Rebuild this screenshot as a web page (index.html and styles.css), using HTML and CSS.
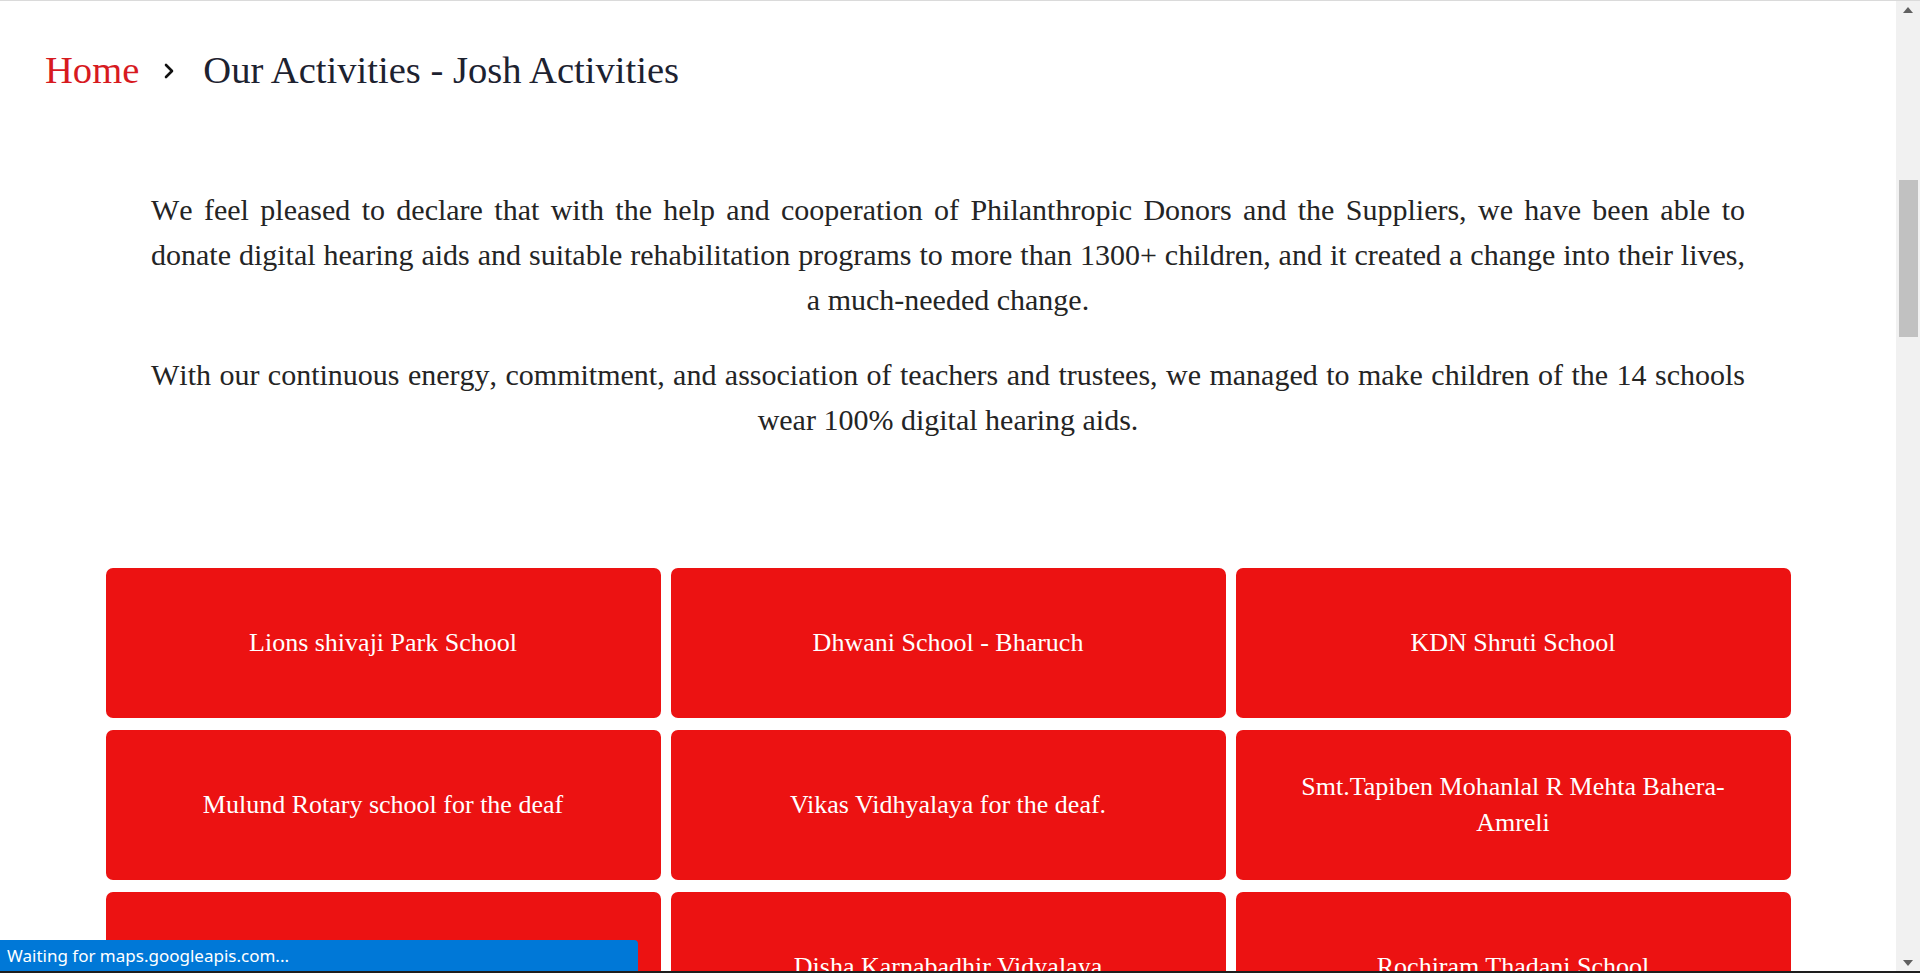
FILE: index.html
```html
<!DOCTYPE html>
<html lang="en">
<head>
<meta charset="utf-8">
<title>Our Activities - Josh Activities</title>
<link rel="stylesheet" href="styles.css">
</head>
<body>
<div class="window">
  <main class="page">
    <nav class="crumbs">
      <a class="crumb-home" href="#">Home</a>
      <svg class="crumb-sep" width="12" height="16" viewBox="0 0 12 16" aria-hidden="true"><path d="M3 2 L9 8 L3 14" fill="none" stroke="#111" stroke-width="2.6" stroke-linecap="round" stroke-linejoin="round"/></svg>
      <span class="crumb-current">Our Activities - Josh Activities</span>
    </nav>

    <section class="intro">
      <p>We feel pleased to declare that with the help and cooperation of Philanthropic Donors and the Suppliers, we have been able to donate digital hearing aids and suitable rehabilitation programs to more than 1300+ children, and it created a change into their lives, a much-needed change.</p>
      <p>With our continuous energy, commitment, and association of teachers and trustees, we managed to make children of the 14 schools wear 100% digital hearing aids.</p>
    </section>

    <section class="schools">
      <div class="school">Lions shivaji Park School</div>
      <div class="school">Dhwani School - Bharuch</div>
      <div class="school">KDN Shruti School</div>
      <div class="school">Mulund Rotary school for the deaf</div>
      <div class="school">Vikas Vidhyalaya for the deaf.</div>
      <div class="school">Smt.Tapiben Mohanlal R Mehta Bahera-Amreli</div>
      <div class="school"></div>
      <div class="school">Disha Karnabadhir Vidyalaya</div>
      <div class="school">Rochiram Thadani School</div>
    </section>
  </main>

  <div class="scrollbar" aria-hidden="true">
    <div class="sb-btn"><svg width="10" height="6" viewBox="0 0 10 6"><polygon points="0,6 10,6 5,0" fill="#606060"/></svg></div>
    <div class="sb-thumb"></div>
    <div class="sb-space"></div>
    <div class="sb-btn"><svg width="10" height="6" viewBox="0 0 10 6"><polygon points="0,0 10,0 5,6" fill="#606060"/></svg></div>
  </div>

  <div class="status">Waiting for maps.googleapis.com...</div>
</div>
</body>
</html>
```

FILE: styles.css
```css
html, body {
  margin: 0;
  padding: 0;
  background: #ffffff;
}

body {
  overflow: hidden;
}

.window {
  position: relative;
  display: flex;
  height: 970px;
  border-top: 1px solid #dadada;
  border-bottom: 2px solid #1e1e1e;
  overflow: hidden;
  background: #ffffff;
}

.page {
  flex: 1;
  min-width: 0;
  overflow: hidden;
  font-family: "Liberation Serif", "Times New Roman", serif;
}

/* breadcrumb */
.crumbs {
  display: flex;
  align-items: center;
  padding: 45px 0 0 45px;
  height: 48px;
  font-size: 38.6px;
  line-height: 48px;
}

.crumb-home {
  color: #d71a1f;
  text-decoration: none;
}

.crumb-sep {
  margin: 1px 28px 0 24px;
  flex: none;
}

.crumb-current {
  color: #1d2230;
}

/* intro text */
.intro {
  width: 1594px;
  margin: 93px auto 0;
  color: #242424;
  font-size: 30px;
  line-height: 45px;
  text-align: justify;
  text-align-last: center;
  font-kerning: none;
}

.intro p {
  margin: 0;
}

.intro p + p {
  margin-top: 30px;
}

/* school cards */
.schools {
  display: grid;
  grid-template-columns: repeat(3, 1fr);
  column-gap: 10px;
  row-gap: 12px;
  width: 1685px;
  margin: 126px auto 0;
}

.school {
  display: flex;
  align-items: center;
  justify-content: center;
  height: 150px;
  padding: 0 40px;
  box-sizing: border-box;
  background: #ec1212;
  border-radius: 7px;
  color: #ffffff;
  font-size: 26px;
  line-height: 36px;
  text-align: center;
}

/* scrollbar */
.scrollbar {
  flex: none;
  width: 24px;
  display: flex;
  flex-direction: column;
  background: #f1f1f1;
}

.sb-btn {
  height: 17px;
  display: flex;
  align-items: center;
  justify-content: center;
}

.sb-thumb {
  margin: 162px 2px 0 3px;
  height: 157px;
  background: #c1c1c1;
}

.sb-space {
  flex: 1;
}

/* browser status bubble */
.status {
  position: absolute;
  left: 0;
  bottom: 0;
  width: 631px;
  height: 31px;
  padding-left: 7px;
  background: #0078d7;
  color: #ffffff;
  border-top-right-radius: 4px;
  font-family: "Noto Sans", "Open Sans", sans-serif;
  font-size: 17px;
  line-height: 31px;
  white-space: nowrap;
}
```
